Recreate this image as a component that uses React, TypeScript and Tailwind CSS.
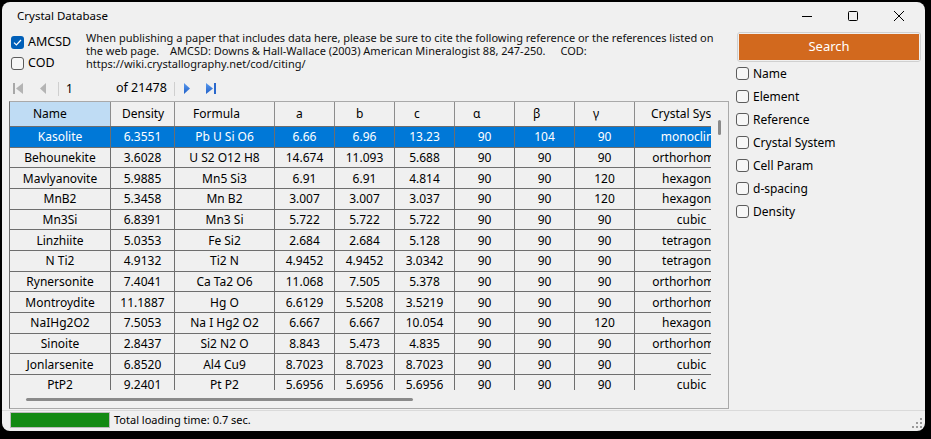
import React from "react";

interface Mineral {
  name: string;
  density: string;
  formula: string;
  a: string;
  b: string;
  c: string;
  alpha: string;
  beta: string;
  gamma: string;
  system: string;
}

const rows: Mineral[] = [
  { name: "Kasolite", density: "6.3551", formula: "Pb U Si O6", a: "6.66", b: "6.96", c: "13.23", alpha: "90", beta: "104", gamma: "90", system: "monoclinic" },
  { name: "Behounekite", density: "3.6028", formula: "U S2 O12 H8", a: "14.674", b: "11.093", c: "5.688", alpha: "90", beta: "90", gamma: "90", system: "orthorhombic" },
  { name: "Mavlyanovite", density: "5.9885", formula: "Mn5 Si3", a: "6.91", b: "6.91", c: "4.814", alpha: "90", beta: "90", gamma: "120", system: "hexagonal" },
  { name: "MnB2", density: "5.3458", formula: "Mn B2", a: "3.007", b: "3.007", c: "3.037", alpha: "90", beta: "90", gamma: "120", system: "hexagonal" },
  { name: "Mn3Si", density: "6.8391", formula: "Mn3 Si", a: "5.722", b: "5.722", c: "5.722", alpha: "90", beta: "90", gamma: "90", system: "cubic" },
  { name: "Linzhiite", density: "5.0353", formula: "Fe Si2", a: "2.684", b: "2.684", c: "5.128", alpha: "90", beta: "90", gamma: "90", system: "tetragonal" },
  { name: "N Ti2", density: "4.9132", formula: "Ti2 N", a: "4.9452", b: "4.9452", c: "3.0342", alpha: "90", beta: "90", gamma: "90", system: "tetragonal" },
  { name: "Rynersonite", density: "7.4041", formula: "Ca Ta2 O6", a: "11.068", b: "7.505", c: "5.378", alpha: "90", beta: "90", gamma: "90", system: "orthorhombic" },
  { name: "Montroydite", density: "11.1887", formula: "Hg O", a: "6.6129", b: "5.5208", c: "3.5219", alpha: "90", beta: "90", gamma: "90", system: "orthorhombic" },
  { name: "NaIHg2O2", density: "7.5053", formula: "Na I Hg2 O2", a: "6.667", b: "6.667", c: "10.054", alpha: "90", beta: "90", gamma: "120", system: "hexagonal" },
  { name: "Sinoite", density: "2.8437", formula: "Si2 N2 O", a: "8.843", b: "5.473", c: "4.835", alpha: "90", beta: "90", gamma: "90", system: "orthorhombic" },
  { name: "Jonlarsenite", density: "6.8520", formula: "Al4 Cu9", a: "8.7023", b: "8.7023", c: "8.7023", alpha: "90", beta: "90", gamma: "90", system: "cubic" },
  { name: "PtP2", density: "9.2401", formula: "Pt P2", a: "5.6956", b: "5.6956", c: "5.6956", alpha: "90", beta: "90", gamma: "90", system: "cubic" },
];

// header label, column width (incl. right grid line), header left padding
const columns: { key: keyof Mineral; label: string; w: string; pl: string }[] = [
  { key: "name", label: "Name", w: "w-[101px]", pl: "pl-[23px]" },
  { key: "density", label: "Density", w: "w-[64px]", pl: "pl-[11px]" },
  { key: "formula", label: "Formula", w: "w-[100px]", pl: "pl-[18px]" },
  { key: "a", label: "a", w: "w-[60px]", pl: "pl-[21px]" },
  { key: "b", label: "b", w: "w-[60px]", pl: "pl-[21px]" },
  { key: "c", label: "c", w: "w-[60px]", pl: "pl-[19px]" },
  { key: "alpha", label: "α", w: "w-[60px]", pl: "pl-[18px]" },
  { key: "beta", label: "β", w: "w-[60px]", pl: "pl-[18px]" },
  { key: "gamma", label: "γ", w: "w-[60px]", pl: "pl-[18px]" },
  { key: "system", label: "Crystal System", w: "w-[114px]", pl: "pl-[16px]" },
];

const filters = ["Name", "Element", "Reference", "Crystal System", "Cell Param", "d-spacing", "Density"];

function CheckBox({ checked = false }: { checked?: boolean }) {
  if (checked) {
    return (
      <span className="flex h-[13px] w-[13px] shrink-0 items-center justify-center rounded-[3px] bg-[#005fb8]">
        <svg width="9" height="7" viewBox="0 0 9 7">
          <path d="M1 3.6 L3.4 6 L8 1" fill="none" stroke="white" strokeWidth="1.2" />
        </svg>
      </span>
    );
  }
  return <span className="h-[13px] w-[13px] shrink-0 rounded-[3px] border border-[#5c5c5c] bg-[#f7f7f7]" />;
}

function NavBar() {
  return (
    <div className="flex h-[21px] items-center text-[12px]">
      {/* first */}
      <svg className="ml-[4px]" width="10" height="11" viewBox="0 0 10 11">
        <rect x="0" y="0" width="2" height="11" fill="#a8a8a8" />
        <path d="M3 5.5 L10 0 L10 11 Z" fill="#b4b4b4" />
      </svg>
      {/* prev */}
      <svg className="ml-[17px]" width="6" height="11" viewBox="0 0 6 11">
        <path d="M0 5.5 L6 0 L6 11 Z" fill="#b4b4b4" />
      </svg>
      <span className="ml-[12px] h-[14px] w-px bg-[#cfcfcf]" />
      <span className="ml-[7px] w-[50px]">1</span>
      <span className="w-[58px] text-[12.5px]">of 21478</span>
      <span className="h-[14px] w-px bg-[#cfcfcf]" />
      {/* next */}
      <svg className="ml-[9px]" width="6" height="11" viewBox="0 0 6 11">
        <defs>
          <linearGradient id="bl" x1="0" y1="0" x2="0" y2="1">
            <stop offset="0" stopColor="#5b9bef" />
            <stop offset="1" stopColor="#1f5fc8" />
          </linearGradient>
        </defs>
        <path d="M0 0 L6 5.5 L0 11 Z" fill="url(#bl)" />
      </svg>
      {/* last */}
      <svg className="ml-[16px]" width="10" height="11" viewBox="0 0 10 11">
        <path d="M0 0 L7 5.5 L0 11 Z" fill="url(#bl)" />
        <rect x="8" y="0" width="2" height="11" fill="#2a68cc" />
      </svg>
    </div>
  );
}

function DataTable() {
  return (
    <div className="flex h-[308px] flex-col border-y border-l border-r border-[#a9a9a9] border-l-[#6e6e6e]">
      <div className="flex h-[288px]">
        <div className="w-[701px] overflow-hidden">
          <div className="w-[739px]">
            {/* header */}
            <div className="flex h-[25px] border-b border-[#6e6e6e]">
              {columns.map((col, i) => (
                <div
                  key={col.key}
                  className={`${col.w} ${col.pl} flex shrink-0 items-center border-r border-[#8c8c8c] ${
                    i === 0 ? "bg-[#bfdcf4]" : ""
                  }`}
                >
                  {col.label}
                </div>
              ))}
            </div>
            {rows.map((row, ri) => (
              <div
                key={row.name}
                className={`flex h-[20.67px] border-b border-[#6e6e6e] ${
                  ri === 0 ? "bg-[#0078d7] text-white" : ""
                }`}
              >
                {columns.map((col) => (
                  <div
                    key={col.key}
                    className={`${col.w} flex shrink-0 items-center justify-center border-r border-[#6e6e6e] pt-[1px] whitespace-nowrap`}
                  >
                    {row[col.key]}
                  </div>
                ))}
              </div>
            ))}
          </div>
        </div>
        {/* vertical scrollbar */}
        <div className="flex w-[17px] justify-center pt-[18px]">
          <div className="h-[15px] w-[3px] rounded-full bg-[#8a8a8a]" />
        </div>
      </div>
      {/* horizontal scrollbar */}
      <div className="flex h-[18px] items-center pl-[16px]">
        <div className="h-[3px] w-[387px] rounded-full bg-[#8a8a8a]" />
      </div>
    </div>
  );
}

export default function App() {
  return (
    <div className="h-[439px] w-[931px] bg-black pl-[2px] pt-[2px] font-['Noto_Sans',sans-serif] text-[12px] text-black">
      <div className="flex h-[429px] w-[923px] flex-col overflow-hidden rounded-[8px] bg-[#f0f0f0]">
        {/* title bar */}
        <div className="flex h-[28px] shrink-0 items-center">
          <span className="ml-[15px] flex-1 text-[11.5px]">Crystal Database</span>
          <div className="mr-[3px] flex h-full">
            <div className="flex w-[46px] items-center justify-center">
              <svg width="10" height="10" viewBox="0 0 10 10">
                <path d="M0 5.5 H10" stroke="black" strokeWidth="1" />
              </svg>
            </div>
            <div className="flex w-[46px] items-center justify-center">
              <svg width="10" height="10" viewBox="0 0 10 10">
                <rect x="0.5" y="0.5" width="9" height="9" rx="1" fill="none" stroke="black" strokeWidth="1" />
              </svg>
            </div>
            <div className="flex w-[46px] items-center justify-center">
              <svg width="10" height="10" viewBox="0 0 10 10">
                <path d="M0 0 L10 10 M10 0 L0 10" stroke="black" strokeWidth="1" />
              </svg>
            </div>
          </div>
        </div>

        {/* main */}
        <div className="flex h-[380px] shrink-0 pl-[7px] pr-[4px]">
          <div className="flex w-[720px] flex-col">
            <div className="flex h-[48px]">
              <div className="flex w-[77px] flex-col pl-[2px] pt-[5px] text-[12.5px]">
                <label className="flex h-[15px] items-center gap-[4px]">
                  <CheckBox checked />
                  <span>AMCSD</span>
                </label>
                <label className="mt-[6px] flex h-[15px] items-center gap-[4px]">
                  <CheckBox />
                  <span>COD</span>
                </label>
              </div>
              <div className="pt-[1px] text-[11px] leading-[13px] whitespace-nowrap text-[#111]">
                <div>When publishing a paper that includes data here, please be sure to cite the following reference or the references listed on</div>
                <div className="flex">
                  <span className="w-[84px]">the web page.</span>
                  <span>AMCSD: Downs &amp; Hall-Wallace (2003) American Mineralogist 88, 247-250.</span>
                  <span className="ml-[15px]">COD:</span>
                </div>
                <div>https://wiki.crystallography.net/cod/citing/</div>
              </div>
            </div>
            <NavBar />
            <div className="mt-[2px]">
              <DataTable />
            </div>
          </div>

          <div className="ml-[7px] flex flex-1 flex-col pt-[2px]">
            <div className="ml-px h-[30px] rounded-[3px] border border-[#d0d0d0] p-px">
              <div className="flex h-full items-center justify-center bg-[#d2691e] text-[13px] text-white">
                Search
              </div>
            </div>
            {filters.map((f) => (
              <label key={f} className="flex h-[23px] items-center gap-[4px]">
                <CheckBox />
                <span>{f}</span>
              </label>
            ))}
          </div>
        </div>

        {/* status bar */}
        <div className="flex flex-1 items-start border-t border-[#dadada] pl-[8px] pt-[1px]">
          <div className="h-[16px] w-[100px] border border-[#bcbcbc] bg-[#138a13]" />
          <span className="ml-[4px] text-[11px] leading-[16px]">Total loading time: 0.7 sec.</span>
          <svg className="ml-auto mr-[3px] mt-[6px]" width="10" height="10" viewBox="0 0 10 10">
            <g fill="#9a9a9a">
              <rect x="8" y="0" width="2" height="2" />
              <rect x="8" y="4" width="2" height="2" />
              <rect x="4" y="4" width="2" height="2" />
              <rect x="8" y="8" width="2" height="2" />
              <rect x="4" y="8" width="2" height="2" />
              <rect x="0" y="8" width="2" height="2" />
            </g>
          </svg>
        </div>
      </div>
    </div>
  );
}
